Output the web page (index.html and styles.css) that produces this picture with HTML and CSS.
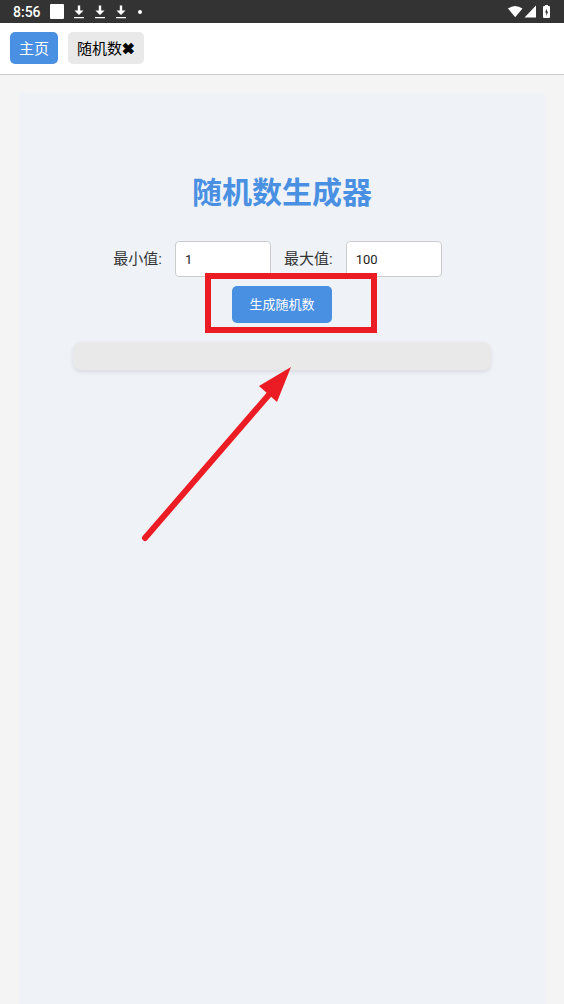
FILE: index.html
```
<!DOCTYPE html>
<html lang="zh-CN">
<head>
<meta charset="utf-8">
<meta name="viewport" content="width=device-width, initial-scale=1">
<title>随机数生成器</title>
<link rel="stylesheet" href="styles.css">
</head>
<body>
<div class="status-bar">
  <span class="clock">8:56</span>
  <span class="notice-square"></span>
  <svg class="notice" viewBox="0 0 12 14"><path d="M4.800 0.500h2.400v5h3.300L6 10 1.500 5.500h3.300zM1 12h10v1.300H1z"/></svg>
  <svg class="notice" viewBox="0 0 12 14"><path d="M4.800 0.500h2.400v5h3.300L6 10 1.500 5.500h3.300zM1 12h10v1.300H1z"/></svg>
  <svg class="notice" viewBox="0 0 12 14"><path d="M4.800 0.500h2.400v5h3.300L6 10 1.500 5.500h3.300zM1 12h10v1.300H1z"/></svg>
  <span class="notice-dot"></span>
  <svg class="system" viewBox="0 0 44 14">
    <path d="M1 3.500Q8-1.500 15.500 3.500L8.200 12.200z"/>
    <path d="M29 0.500v12H17.500z"/>
    <path fill-rule="evenodd" d="M38 0h3v1h1q1 0 1 1v10q0 1-1 1h-5q-1 0-1-1V2q0-1 1-1h1zM40 3.500L38 7.500h1.200V11L41.200 6.500H40z"/>
  </svg>
</div>
<nav class="tabs">
  <button class="tab tab-active" type="button">主页</button>
  <button class="tab" type="button">随机数<span class="tab-close">✖</span></button>
</nav>
<main class="page">
  <section class="generator">
    <h1 class="title">随机数生成器</h1>
    <form class="form">
      <div class="fields">
        <label class="label" for="min">最小值:</label>
        <input class="number" id="min" type="text" inputmode="numeric" value="1">
        <label class="label" for="max">最大值:</label>
        <input class="number" id="max" type="text" inputmode="numeric" value="100">
      </div>
      <button class="generate" type="button">生成随机数</button>
    </form>
    <output class="result" for="min max"></output>
    <svg class="marker" viewBox="0 0 240 270">
      <rect x="68" y="4" width="166" height="54" fill="none" stroke="#ec1c24" stroke-width="6"/>
      <path d="M5 266L133 118" fill="none" stroke="#ec1c24" stroke-width="6" stroke-linecap="round"/>
      <path d="M151 95L137 130 119 114z" fill="#ec1c24"/>
    </svg>
  </section>
</main>
</body>
</html>
```
FILE: styles.css
```
* {
  box-sizing: border-box;
}

body {
  display: flex;
  flex-direction: column;
  min-height: 100vh;
  margin: 0;
  background: #f4f4f4;
  color: #333;
  font-family: Roboto, "Noto Sans CJK SC", sans-serif;
  font-size: 15px;
}

button,
input {
  font-family: inherit;
}

.status-bar {
  display: flex;
  align-items: center;
  gap: 9px;
  height: 23px;
  padding: 0 13px;
  background: #333;
  color: #fff;
}

.clock {
  font-size: 14px;
  font-weight: 500;
}

.notice-square {
  width: 14px;
  height: 15px;
  border-radius: 1px;
  background: #fff;
}

.notice {
  width: 12px;
  height: 14px;
  fill: #fff;
}

.notice-dot {
  width: 4px;
  height: 4px;
  margin-left: 2px;
  border-radius: 50%;
  background: #fff;
}

.system {
  width: 44px;
  height: 14px;
  margin-left: auto;
  fill: #fff;
}

.tabs {
  display: flex;
  align-items: center;
  gap: 10px;
  height: 52px;
  padding: 0 10px 2px;
  border-bottom: 1px solid #ccc;
  background: #fff;
}

.tab {
  height: 32px;
  padding: 0 9px;
  border: 0;
  border-radius: 5px;
  background: #e9e9e9;
  color: #000;
  font-size: 15px;
}

.tab-active {
  background: #4a90e2;
  color: #fff;
}

.tab-close {
  font-family: "DejaVu Sans", sans-serif;
  -webkit-text-stroke: 1px #000;
}

.page {
  display: flex;
  flex: 1;
  padding: 18px 19px 0;
}

.generator {
  position: relative;
  flex: 1;
  padding: 78px 54px 0;
  background: #eff3f8;
}

.title {
  margin: 0;
  color: #4a90e2;
  font-size: 30px;
  font-weight: 700;
  line-height: 44px;
  text-align: center;
}

.form {
  display: flex;
  flex-direction: column;
  align-items: center;
  gap: 9px;
  margin-top: 26px;
}

.fields {
  display: flex;
  align-items: center;
  gap: 13px;
  padding-right: 9px;
}

.label {
  padding-bottom: 4px;
  white-space: nowrap;
}

.number {
  width: 96px;
  height: 36px;
  padding: 0 9px;
  border: 1px solid #ccc;
  border-radius: 4px;
  background: #fff;
  color: #222;
  font-size: 13px;
}

.generate {
  width: 100px;
  height: 37px;
  padding: 0 0 2px;
  border: 0;
  border-radius: 5px;
  background: #4a90e2;
  color: #fff;
  font-size: 13px;
}

.result {
  display: block;
  min-height: 28px;
  margin-top: 19px;
  border-radius: 8px;
  background: #e9e9e9;
  box-shadow: 0 2px 4px rgba(0, 0, 0, 0.1);
}

/* Hand-drawn callout laid over the form */
.marker {
  position: absolute;
  top: 179px;
  left: 50%;
  width: 240px;
  height: 270px;
  margin-left: -142px;
  pointer-events: none;
}
```
